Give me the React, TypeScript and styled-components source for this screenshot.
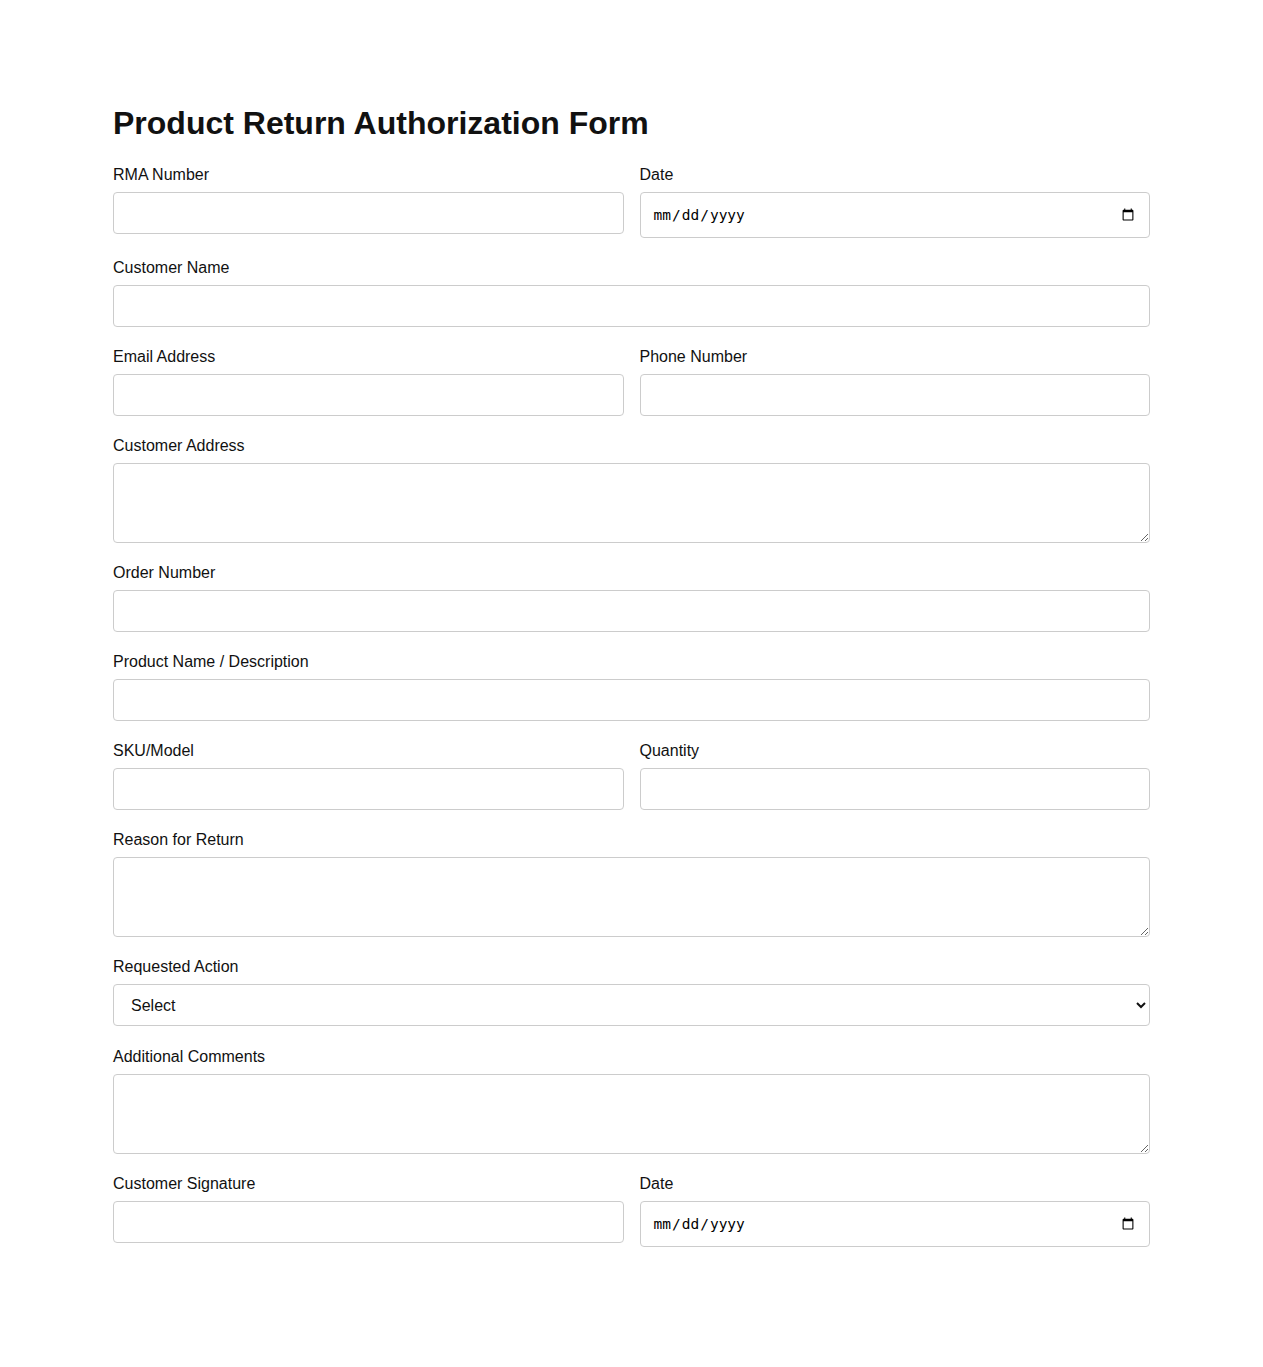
import React from 'react';
import styled, { createGlobalStyle } from 'styled-components';

const GlobalStyle = createGlobalStyle`
  body {
    margin: 0;
    background: #fff;
    font-family: "Liberation Sans", Arial, sans-serif;
    color: #111;
  }
`;

const Page = styled.div`
  max-width: 1037px;
  margin: 0 auto;
  padding: 85px 0 60px;
`;

const Title = styled.h1`
  font-size: 32px;
  font-weight: 700;
  margin: 20px 0 24px;
`;

const Row = styled.div`
  display: grid;
  grid-template-columns: 1fr 1fr;
  gap: 16px;
`;

const Group = styled.div<{ $extra?: number }>`
  margin-bottom: ${(p) => 21 + (p.$extra ?? 0)}px;
`;

const Label = styled.label`
  display: block;
  font-size: 16px;
  margin-bottom: 8px;
`;

const fieldBase = `
  display: block;
  width: 100%;
  box-sizing: border-box;
  border: 1px solid #ccc;
  border-radius: 4px;
  background: #fff;
`;

const Input = styled.input`
  ${fieldBase}
  padding: 12px;
  font-size: ${(p) => (p.type === 'date' ? '14.5px' : '14px')};
  height: ${(p) => (p.type === 'date' ? '46px' : '42px')};
`;

const TextArea = styled.textarea`
  ${fieldBase}
  padding: 12px;
  font-size: 14px;
  height: 80px;
  resize: vertical;
`;

const Select = styled.select`
  ${fieldBase}
  padding: 10px 13px;
  height: 42px;
  font-size: 16px;
  font-family: "Liberation Sans", Arial, sans-serif;
  color: #111;
`;

type FieldProps = { label: string; type?: string };

const Field = ({ label, type = 'text' }: FieldProps) => (
  <Group>
    <Label>{label}</Label>
    <Input type={type} />
  </Group>
);

const AreaField = ({ label }: { label: string }) => (
  <Group>
    <Label>{label}</Label>
    <TextArea />
  </Group>
);

export default function App() {
  return (
    <>
      <GlobalStyle />
      <Page>
        <Title>Product Return Authorization Form</Title>
        <Row>
          <Field label="RMA Number" />
          <Field label="Date" type="date" />
        </Row>
        <Field label="Customer Name" />
        <Row>
          <Field label="Email Address" type="email" />
          <Field label="Phone Number" type="tel" />
        </Row>
        <AreaField label="Customer Address" />
        <Field label="Order Number" />
        <Field label="Product Name / Description" />
        <Row>
          <Field label="SKU/Model" />
          <Field label="Quantity" type="number" />
        </Row>
        <AreaField label="Reason for Return" />
        <Group $extra={1}>
          <Label>Requested Action</Label>
          <Select defaultValue="">
            <option value="">Select</option>
            <option value="refund">Refund</option>
            <option value="replacement">Replacement</option>
            <option value="repair">Repair</option>
          </Select>
        </Group>
        <AreaField label="Additional Comments" />
        <Row>
          <Field label="Customer Signature" />
          <Field label="Date" type="date" />
        </Row>
      </Page>
    </>
  );
}
